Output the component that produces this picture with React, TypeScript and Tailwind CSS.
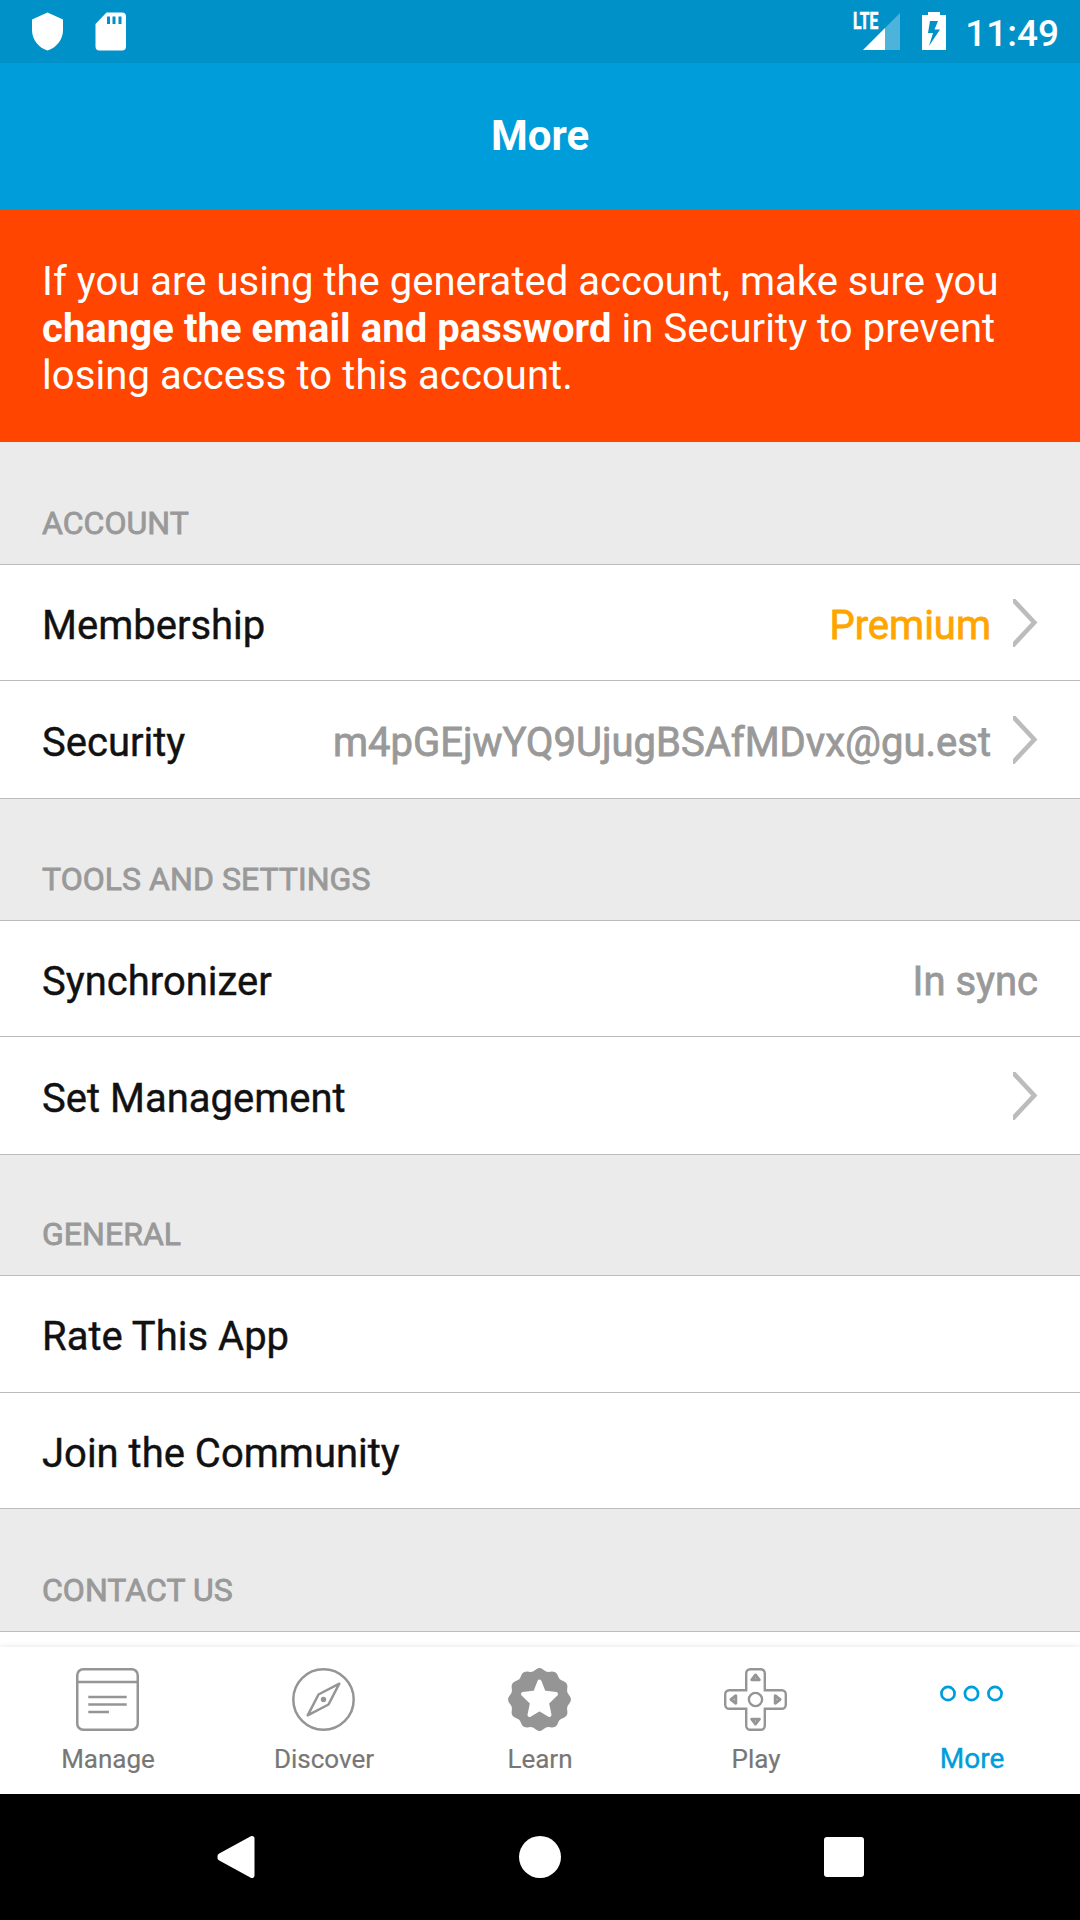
import React from "react";

type RowData = { label: string; value?: string; tone?: string; chevron?: boolean; height: string };

function Chevron() {
  return (
    <svg className="ml-[22px] h-[48px] w-[25px] shrink-0 overflow-hidden" viewBox="0 0 25 48" fill="none">
      <path d="M-2 -1.500L21.300 23.500L-2 48.500" stroke="#bcbcbc" strokeWidth="4.600" />
    </svg>
  );
}

function Row({ label, value, tone = "text-[#999]", chevron, height }: RowData) {
  return (
    <div className={`flex items-center border-b border-[#bcbcbc] bg-white px-[42px] text-[40px] ${height}`}>
      <span className="pt-[6px] text-[#111] [-webkit-text-stroke:0.4px_currentColor]">{label}</span>
      <span className={`ml-auto pt-[6px] [-webkit-text-stroke:0.8px_currentColor] ${tone}`}>{value}</span>
      {chevron && <Chevron />}
    </div>
  );
}

function Header({ children, height }: { children: string; height: string }) {
  return (
    <div
      className={`flex items-end border-b border-[#bcbcbc] bg-[#ebebeb] pb-[22px] pl-[42px] text-[32px] leading-[37px] tracking-[0.04px] text-[#999] [-webkit-text-stroke:0.8px_currentColor] ${height}`}
    >
      {children}
    </div>
  );
}

const gray = "#959595";

function ManageIcon() {
  return (
    <svg className="mr-px h-[63px] w-[63px]" viewBox="0 0 63 63" fill="none" stroke={gray} strokeWidth="2.500">
      <rect x="1.250" y="1.250" width="60.500" height="60.500" rx="6" />
      <path d="M1 14H62M12.300 29H50.700M12.300 36.500H50.700M12.300 44H33" />
    </svg>
  );
}

function DiscoverIcon() {
  return (
    <svg className="mr-px h-[63px] w-[63px]" viewBox="0 0 63 63" fill="none" stroke={gray} strokeWidth="2.500">
      <circle cx="31.500" cy="31.500" r="30.200" />
      <path d="M47.300 15.700L26.500 26.500L15.700 47.300L36.500 36.500Z" strokeLinejoin="round" />
      <circle cx="31.500" cy="31.500" r="2.700" fill={gray} stroke="none" />
    </svg>
  );
}

function LearnIcon() {
  const points: string[] = [];
  for (let i = 0; i < 120; i++) {
    const a = (i / 120) * Math.PI * 2;
    const r = 30.1 + 1.35 * Math.cos(12 * a);
    points.push(`${(31.5 + r * Math.sin(a)).toFixed(2)},${(31.5 - r * Math.cos(a)).toFixed(2)}`);
  }
  return (
    <svg className="mr-px h-[63px] w-[63px]" viewBox="0 0 63 63">
      <polygon points={points.join(" ")} fill={gray} />
      <path
        d="M31.500 13.500L35.800 24.500L48 26L39 34.800L41.500 47L31.500 41L21.500 47L24 34.800L15 26L27.200 24.500Z"
        fill="#fff"
        stroke="#fff"
        strokeWidth="4"
        strokeLinejoin="round"
      />
    </svg>
  );
}

function PlayIcon() {
  return (
    <svg className="mr-px h-[63px] w-[63px]" viewBox="0 0 63 63" fill="none" stroke={gray} strokeWidth="2.400">
      <path d="M26.200 1.200H36.800a4 4 0 0 1 4 4V22.200H57.800a4 4 0 0 1 4 4V36.800a4 4 0 0 1 -4 4H40.800V57.800a4 4 0 0 1 -4 4H26.200a4 4 0 0 1 -4 -4V40.800H5.200a4 4 0 0 1 -4 -4V26.200a4 4 0 0 1 4 -4H22.200V5.200a4 4 0 0 1 4 -4Z" />
      <circle cx="31.500" cy="31.500" r="6.600" />
      <path
        d="M31.500 7L35.300 11.800H27.700ZM31.500 56L35.300 51.200H27.700ZM7 31.500L11.800 27.700V35.300ZM56 31.500L51.200 27.700V35.300Z"
        strokeLinejoin="round"
        strokeWidth="2.900"
      />
    </svg>
  );
}

function MoreIcon() {
  return (
    <svg className="mr-px h-[63px] w-[65px]" viewBox="0 0 65 63" fill="none" stroke="#009ddb" strokeWidth="2.700">
      <circle cx="9" cy="25.500" r="6.600" />
      <circle cx="32.500" cy="25.500" r="6.600" />
      <circle cx="56" cy="25.500" r="6.600" />
    </svg>
  );
}

const tabs = [
  { label: "Manage", icon: <ManageIcon /> },
  { label: "Discover", icon: <DiscoverIcon /> },
  { label: "Learn", icon: <LearnIcon /> },
  { label: "Play", icon: <PlayIcon /> },
  { label: "More", icon: <MoreIcon />, active: true },
];

export default function App() {
  return (
    <div className="flex h-[1920px] w-[1080px] flex-col overflow-hidden bg-white font-['Roboto',sans-serif]">
      <div className="flex h-[63px] shrink-0 items-start bg-[#0091c9] text-white">
        <svg className="mt-[12px] ml-[31px] h-[39px] w-[33px]" viewBox="0 0 33 39">
          <path d="M16.500 0.500L32 7.500V18C32 28 25 36 16.500 38.500C8 36 1 28 1 18V7.500Z" fill="#fff" />
        </svg>
        <svg className="mt-[12px] ml-[31px] h-[39px] w-[31px]" viewBox="0 0 31 39">
          <path
            fillRule="evenodd"
            d="M11.500 0.500H27a4 4 0 0 1 4 4V34.500a4 4 0 0 1 -4 4H4.500a4 4 0 0 1 -4 -4V12ZM12 4.500V12H15V4.500ZM17.500 4.500V12H20.500V4.500ZM23.500 4.500V12H26.500V4.500Z"
            fill="#fff"
          />
        </svg>
        <div className="relative ml-auto h-[63px] w-[46px]">
          <span className="absolute top-[11px] left-[-1px] origin-left scale-x-[0.68] text-[23px] leading-[22px] font-bold [-webkit-text-stroke:0.6px_currentColor]">
            LTE
          </span>
          <svg className="absolute top-[13px] left-[9px] h-[37px] w-[37px]" viewBox="0 0 37 37">
            <path d="M37 0V37H22V15Z" fill="#4db3db" />
            <path d="M22 15V37H0Z" fill="#fff" />
          </svg>
        </div>
        <svg className="mt-[12px] ml-[22px] h-[38px] w-[24px]" viewBox="0 0 24 38">
          <path fillRule="evenodd" d="M6 0H18V3H24V38H0V3H6ZM8 9L6 21H11L7 34L18 17.500H12.500L16 9Z" fill="#fff" />
        </svg>
        <span className="mt-[11px] mr-[21px] ml-[19px] text-[37px] leading-[46px] font-medium">11:49</span>
      </div>
      <div className="flex h-[147px] shrink-0 items-center justify-center bg-[#009ddb] pb-[2px] text-[42px] font-bold text-white">
        More
      </div>
      <div className="h-[232px] shrink-0 bg-[#ff4500] pt-[48px] pl-[42px] text-[40px] leading-[47px] text-white">
        <span className="tracking-[0.02px]">If you are using the generated account, make sure you</span>
        <br />
        <span className="tracking-[0.06px]">
          <b>change the email and password</b> in Security to prevent
        </span>
        <br />
        <span className="tracking-[0.08px]">losing access to this account.</span>
      </div>
      <div className="min-h-0 flex-1 overflow-hidden">
        <Header height="h-[123px]">ACCOUNT</Header>
        <Row height="h-[116px]" label="Membership" value="Premium" tone="text-[#ffa500]" chevron />
        <Row height="h-[118px]" label="Security" value="m4pGEjwYQ9UjugBSAfMDvx@gu.est" chevron />
        <Header height="h-[122px]">TOOLS AND SETTINGS</Header>
        <Row height="h-[116px]" label="Synchronizer" value="In sync" />
        <Row height="h-[118px]" label="Set Management" chevron />
        <Header height="h-[121px]">GENERAL</Header>
        <Row height="h-[117px]" label="Rate This App" />
        <Row height="h-[116px]" label="Join the Community" />
        <Header height="h-[123px]">CONTACT US</Header>
      </div>
      <div className="z-10 grid h-[147px] shrink-0 grid-cols-5 bg-white shadow-[0_0_6px_rgba(0,0,0,0.12)]">
        {tabs.map((tab) => (
          <div key={tab.label} className="flex flex-col items-center pt-[21px]">
            {tab.icon}
            <span
              className={
                tab.active
                  ? "mt-[11px] text-[28px] leading-[34px] text-[#009ddb] [-webkit-text-stroke:0.4px_currentColor]"
                  : "mt-[12px] text-[26px] leading-[32px] text-[#777] [-webkit-text-stroke:0.2px_currentColor]"
              }
            >
              {tab.label}
            </span>
          </div>
        ))}
      </div>
      <div className="flex h-[126px] shrink-0 items-center justify-between bg-black pr-[216px] pl-[217px]">
        <svg className="h-[42px] w-[38px]" viewBox="0 0 38 42">
          <path d="M35 2.500L3 20V22L35 39.500Z" fill="#fff" stroke="#fff" strokeWidth="5" strokeLinejoin="round" />
        </svg>
        <div className="h-[42px] w-[42px] rounded-full bg-white" />
        <div className="h-[40px] w-[40px] rounded-[3px] bg-white" />
      </div>
    </div>
  );
}
